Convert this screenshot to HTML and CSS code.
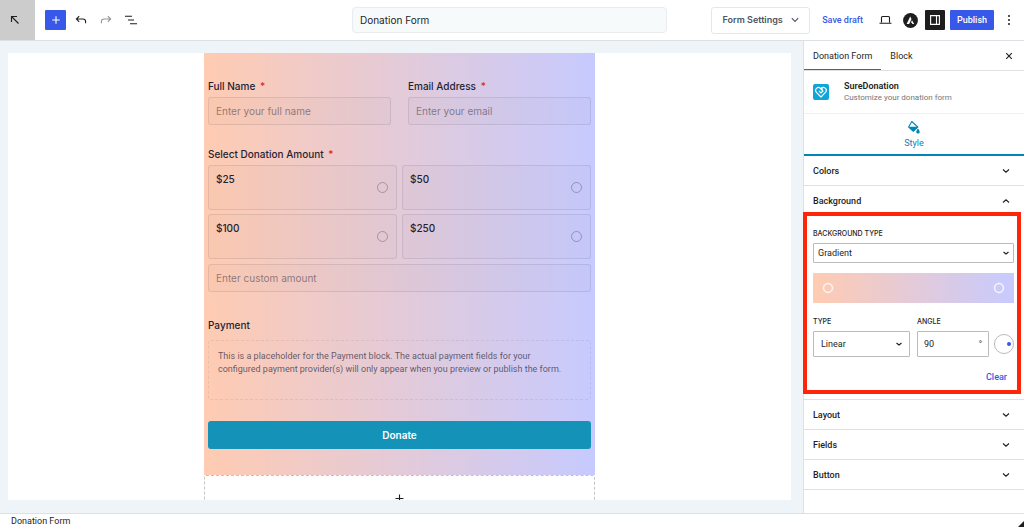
FILE: index.html
```html
<!DOCTYPE html>
<html lang="en">
<head>
    <meta charset="UTF-8">
    <meta name="viewport" content="width=device-width, initial-scale=1.0">
    <title>Donation Form - SureDonation</title>
    <link rel="stylesheet" href="styles.css">
</head>
<body>
    <header class="topbar">
        <div class="tools">
            <a href="#" class="back" aria-label="Back">
                <svg width="10" height="10" viewBox="0 0 10 10"><path d="M1.5 7V1.5H7M1.5 1.5l7 7"/></svg>
            </a>
            <button type="button" class="icon-btn add" aria-label="Add block">
                <svg width="10" height="10" viewBox="0 0 10 10"><path d="M5 1.2v7.6M1.2 5h7.6"/></svg>
            </button>
            <button type="button" class="icon-btn" aria-label="Undo">
                <svg width="12" height="10" viewBox="0 0 12 10"><path d="M4.2 1.2L1.4 4l2.8 2.8M1.4 4h6.4q2.8 0 2.8 2.6v1.6"/></svg>
            </button>
            <button type="button" class="icon-btn off" aria-label="Redo">
                <svg width="12" height="10" viewBox="0 0 12 10"><path d="M7.8 1.2L10.6 4 7.8 6.8M10.6 4H4.2Q1.4 4 1.4 6.6v1.6"/></svg>
            </button>
            <button type="button" class="icon-btn" aria-label="Document overview">
                <svg width="12" height="10" viewBox="0 0 12 10"><path d="M0 1.3h7M3 5h6M5 8.7h7"/></svg>
            </button>
        </div>
        <input type="text" class="title" value="Donation Form" aria-label="Form title">
        <div class="actions">
            <button type="button" class="settings">Form Settings
                <svg width="8" height="6" viewBox="0 0 8 6"><path d="M.8 1.2L4 4.4l3.2-3.2"/></svg>
            </button>
            <button type="button" class="save">Save draft</button>
            <button type="button" class="icon-btn" aria-label="Preview">
                <svg width="13" height="10" viewBox="0 0 13 10"><path d="M2.5 7.5v-5q0-1 1-1h6q1 0 1 1v5M.5 8.3h12"/></svg>
            </button>
            <button type="button" class="icon-btn" aria-label="Astra">
                <svg class="astra" width="15" height="15" viewBox="0 0 15 15"><circle cx="7.5" cy="7.5" r="7.4"/><path d="M3.6 11L7.2 3.4l1.3 2.7L6.2 11zM9 7.2L11.2 11H9.4l-.6-1.2h-1z"/></svg>
            </button>
            <button type="button" class="icon-btn toggle" aria-label="Settings">
                <svg width="10" height="10" viewBox="0 0 10 10"><path d="M.6.6h8.8v8.8H.6zM6.5.6v8.8"/></svg>
            </button>
            <button type="button" class="publish">Publish</button>
            <button type="button" class="icon-btn dots" aria-label="Options">
                <svg width="4" height="12" viewBox="0 0 4 12"><circle cx="2" cy="2" r="1"/><circle cx="2" cy="6" r="1"/><circle cx="2" cy="10" r="1"/></svg>
            </button>
        </div>
    </header>

    <div class="editor">
        <main class="canvas">
            <div class="page">
                <form class="form">
                    <div class="two-cols">
                        <div>
                            <label class="label" for="fullName">Full Name <span>*</span></label>
                            <input type="text" id="fullName" class="field" placeholder="Enter your full name">
                        </div>
                        <div>
                            <label class="label" for="email">Email Address <span>*</span></label>
                            <input type="email" id="email" class="field" placeholder="Enter your email">
                        </div>
                    </div>
                    <fieldset class="amounts">
                        <legend class="label">Select Donation Amount <span>*</span></legend>
                        <div class="options">
                            <label class="option">$25 <input type="radio" name="amount" value="25"></label>
                            <label class="option">$50 <input type="radio" name="amount" value="50"></label>
                            <label class="option">$100 <input type="radio" name="amount" value="100"></label>
                            <label class="option">$250 <input type="radio" name="amount" value="250"></label>
                        </div>
                        <input type="text" class="field" placeholder="Enter custom amount" aria-label="Custom amount">
                    </fieldset>
                    <div class="payment">
                        <h2 class="label">Payment</h2>
                        <p>This is a placeholder for the Payment block. The actual payment fields for your configured payment provider(s) will only appear when you preview or publish the form.</p>
                    </div>
                    <button type="button" class="donate">Donate</button>
                </form>
                <button type="button" class="appender" aria-label="Add block">
                    <svg width="9" height="9" viewBox="0 0 9 9"><path d="M4.5.5v8M.5 4.5h8"/></svg>
                </button>
            </div>
        </main>

        <aside class="sidebar">
            <div class="tabs">
                <button type="button" class="tab active">Donation Form</button>
                <button type="button" class="tab">Block</button>
                <button type="button" class="close" aria-label="Close settings">
                    <svg width="8" height="8" viewBox="0 0 8 8"><path d="M1.2 1.2l5.6 5.6M6.8 1.2L1.2 6.8"/></svg>
                </button>
            </div>
            <div class="brand">
                <svg width="16" height="16" viewBox="0 0 16 16"><rect width="16" height="16" rx="2"/><path d="M8 13L3.4 8.3C.9 5.5 4.8 1.7 7.5 4.5L10 7 8 9 6 7M8 4.5c2.7-2.8 7 .5 4.7 3.6L8 13M8.5 5.8l1.3-1"/></svg>
                <div>
                    <h2>SureDonation</h2>
                    <p>Customize your donation form</p>
                </div>
            </div>
            <button type="button" class="style-tab">
                <svg width="12" height="13" viewBox="0 0 12 13"><path d="M3.8.5L9.8 6 5.3 10.2.6 6z" class="line"/><path d="M.8 5.8h9L5.3 10.4zM10 7.5c2.5 3 2 5 0 5s-2.5-2 0-5z"/></svg>
                Style
            </button>

            <button type="button" class="section">Colors <svg width="8" height="6" viewBox="0 0 8 6"><path d="M1 1.5l3 2.7 3-2.7"/></svg></button>
            <button type="button" class="section open">Background <svg width="8" height="6" viewBox="0 0 8 6"><path d="M1 4.5l3-2.7 3 2.7"/></svg></button>
            <div class="panel">
                <label class="caption" for="bgType">Background type</label>
                <div class="select">
                    <select id="bgType"><option>Gradient</option><option>Color</option><option>Image</option></select>
                    <svg width="8" height="6" viewBox="0 0 8 6"><path d="M1.5 2L4 4l2.5-2"/></svg>
                </div>
                <div class="gradient">
                    <button type="button" aria-label="First color stop"></button>
                    <button type="button" aria-label="Last color stop"></button>
                </div>
                <div class="row">
                    <div class="type">
                        <label class="caption" for="gradType">Type</label>
                        <div class="select tall">
                            <select id="gradType"><option>Linear</option><option>Radial</option></select>
                            <svg width="8" height="6" viewBox="0 0 8 6"><path d="M1.5 2L4 4l2.5-2"/></svg>
                        </div>
                    </div>
                    <div class="angle">
                        <label class="caption" for="angle">Angle</label>
                        <div class="angle-box"><input type="text" id="angle" value="90"><span>°</span></div>
                    </div>
                    <div class="dial"></div>
                </div>
                <button type="button" class="clear">Clear</button>
            </div>
            <button type="button" class="section">Layout <svg width="8" height="6" viewBox="0 0 8 6"><path d="M1 1.5l3 2.7 3-2.7"/></svg></button>
            <button type="button" class="section">Fields <svg width="8" height="6" viewBox="0 0 8 6"><path d="M1 1.5l3 2.7 3-2.7"/></svg></button>
            <button type="button" class="section">Button <svg width="8" height="6" viewBox="0 0 8 6"><path d="M1 1.5l3 2.7 3-2.7"/></svg></button>
        </aside>
    </div>

    <footer class="breadcrumb">
        <span>Donation Form</span>
        <svg width="6" height="6" viewBox="0 0 6 6"><path d="M6 0v6H0z"/></svg>
    </footer>
</body>
</html>
```
FILE: styles.css
```css
* {
    box-sizing: border-box;
}
body {
    margin: 0;
    height: 100vh;
    display: flex;
    flex-direction: column;
    overflow: hidden;
    font-family: Roboto, "Liberation Sans", sans-serif;
    font-size: 9px;
    line-height: 12px;
    color: #1e1e1e;
    background: #fff;
}
button, input, select {
    font: inherit;
    color: inherit;
    margin: 0;
    padding: 0;
}
button {
    background: none;
    border: none;
    cursor: pointer;
}
h2, p {
    margin: 0;
}
svg {
    display: block;
    flex: none;
    fill: none;
    stroke: currentColor;
    stroke-width: 1.1;
}
.title, .settings, .form, .caption {
    font-family: Inter, "Liberation Sans", sans-serif;
}

/* top bar */
.topbar {
    display: grid;
    grid-template-columns: 1fr 315px 1fr;
    align-items: center;
    flex: none;
    height: 41px;
    padding-right: 5px;
    border-bottom: 1px solid #dcdfe3;
}
.tools, .actions {
    display: flex;
    align-items: center;
    gap: 5px;
}
.back {
    display: grid;
    place-items: center;
    width: 35px;
    height: 40px;
    margin-right: 5px;
    padding-right: 5px;
    background: #ccc;
    color: #1e1e1e;
}
.icon-btn {
    display: grid;
    place-items: center;
    width: 20px;
    height: 20px;
}
.add {
    width: 21px;
    background: #3858e9;
    color: #fff;
    border-radius: 1px;
}
.off {
    color: #949494;
}
.title {
    height: 26px;
    padding: 0 7px;
    border: 1px solid #e8ecee;
    border-radius: 4px;
    background: #f7fafa;
    font-size: 10px;
}
.actions {
    justify-content: flex-end;
}
.settings {
    display: flex;
    align-items: center;
    justify-content: center;
    gap: 8px;
    width: 99px;
    height: 27px;
    margin-right: 7px;
    border: 1px solid #e5e7eb;
    border-radius: 3px;
    color: #4b5563;
    font-weight: 600;
    white-space: nowrap;
}
.save {
    margin-right: 7px;
    color: #3858e9;
    font-weight: 500;
    white-space: nowrap;
}
.astra circle {
    fill: #1e1e1e;
    stroke: none;
}
.astra path {
    fill: #fff;
    stroke: none;
}
.toggle {
    background: #1e1e1e;
    color: #fff;
    border-radius: 1px;
}
.publish {
    width: 44px;
    height: 20px;
    border-radius: 1px;
    background: #3858e9;
    color: #fff;
    font-weight: 500;
}
.dots svg {
    fill: #1e1e1e;
    stroke: none;
}

/* canvas */
.editor {
    display: flex;
    flex: 1;
    min-height: 0;
}
.canvas {
    flex: 1;
    min-width: 0;
    padding: 12px 12px 13px 8px;
    background: #eff4f9;
}
.page {
    height: 100%;
    overflow: hidden;
    background: #fff;
}
.form, .appender {
    width: 391px;
    max-width: 100%;
    margin: 0 auto;
}
.form {
    padding: 25px 4px 26px;
    background: linear-gradient(90deg, #ffcbb2, #c7caff);
    color: #1f2433;
}
.two-cols {
    display: grid;
    grid-template-columns: 1fr 1fr;
    gap: 17px;
}
.label {
    display: block;
    padding: 0;
    margin-bottom: 3px;
    font-size: 10px;
    line-height: 16px;
    font-weight: 500;
}
.label span {
    margin-left: 2px;
    color: #dc2626;
}
.field {
    display: block;
    width: 100%;
    height: 28px;
    padding: 0 7px;
    border: 1px solid rgba(31, 36, 51, 0.1);
    border-radius: 3px;
    background: rgba(31, 36, 51, 0.02);
    font-size: 10px;
}
.field::placeholder {
    color: rgba(31, 36, 51, 0.5);
}
.amounts {
    margin: 21px 0 0;
    padding: 0;
    border: none;
}
.options {
    display: grid;
    grid-template-columns: 1fr 1fr;
    gap: 4px 5px;
    margin-bottom: 5px;
}
.option {
    display: flex;
    justify-content: space-between;
    height: 45px;
    padding: 6px 8px 6px 7px;
    border: 1px solid rgba(31, 36, 51, 0.1);
    border-radius: 3px;
    background: rgba(31, 36, 51, 0.02);
    font-size: 10px;
    line-height: 14px;
    font-weight: 500;
}
.option input {
    appearance: none;
    align-self: center;
    width: 11px;
    height: 11px;
    border: 1px solid rgba(31, 36, 51, 0.3);
    border-radius: 50%;
}
.payment {
    margin-top: 25px;
}
.payment .label {
    margin-bottom: 7px;
}
.payment p {
    height: 60px;
    padding: 9px 20px 9px 9px;
    border: 1px dashed rgba(31, 36, 51, 0.08);
    border-radius: 3px;
    font-family: Roboto, "Liberation Sans", sans-serif;
    line-height: 13px;
    color: rgba(31, 36, 51, 0.7);
}
.donate {
    display: block;
    width: 100%;
    height: 28px;
    margin-top: 21px;
    border-radius: 3px;
    background: #1592b8;
    color: #fff;
    font-size: 10px;
    font-weight: 600;
}
.appender {
    display: grid;
    place-items: center;
    height: 46px;
    border: 1px dashed #c4c4c4;
    border-radius: 2px;
    background: #fff;
}

/* settings sidebar */
.sidebar {
    flex: none;
    width: 221px;
    border-left: 1px solid #e0e0e0;
    background: #fff;
}
.tabs {
    display: flex;
    height: 30px;
    padding-right: 11px;
    border-bottom: 1px solid #e0e0e0;
}
.tab {
    padding: 0 9px;
    white-space: nowrap;
}
.tab.active {
    box-shadow: inset 0 -1px #3858e9;
}
.close {
    margin-left: auto;
}
.brand {
    display: flex;
    align-items: center;
    gap: 15px;
    height: 43px;
    padding: 0 9px;
    border-bottom: 1px solid #f0f0f0;
}
.brand rect {
    fill: #0ea5d7;
    stroke: none;
}
.brand path {
    stroke: #fff;
}
.brand h2 {
    font-size: 9px;
    font-weight: 600;
}
.brand p {
    font-size: 8px;
    color: #757575;
}
.style-tab {
    display: flex;
    flex-direction: column;
    align-items: center;
    justify-content: center;
    gap: 3px;
    width: 100%;
    height: 42px;
    padding-top: 1px;
    border-bottom: 2px solid #0284b5;
    color: #0284b5;
}
.style-tab svg {
    fill: currentColor;
    stroke: none;
}
.style-tab .line {
    fill: none;
    stroke: currentColor;
}
.section {
    display: flex;
    align-items: center;
    justify-content: space-between;
    width: 100%;
    height: 30px;
    padding: 0 14px 0 9px;
    border-bottom: 1px solid #e0e0e0;
    font-weight: 500;
}
.open {
    border-bottom: none;
}
.panel {
    position: relative;
    height: 184px;
    padding: 12px 10px 0 9px;
    border-bottom: 1px solid #e0e0e0;
}
/* highlight frame over the background options */
.panel::after {
    content: "";
    position: absolute;
    inset: -4px 3px 5px -1px;
    border: 4px solid #ff2508;
    pointer-events: none;
}
.caption {
    display: block;
    margin-bottom: 3px;
    font-size: 7px;
    font-weight: 500;
    text-transform: uppercase;
}
.select {
    position: relative;
    height: 20px;
}
.select select {
    appearance: none;
    width: 100%;
    height: 100%;
    padding: 0 4px;
    border: 1px solid #bbb;
    border-radius: 1px;
    background: #fff;
}
.select svg {
    position: absolute;
    right: 4px;
    top: calc(50% - 3px);
    pointer-events: none;
}
.select.tall, .angle-box {
    height: 26px;
}
.tall select {
    padding: 0 7px;
}
.tall svg {
    right: 7px;
}
.gradient {
    display: flex;
    align-items: center;
    justify-content: space-between;
    height: 30px;
    margin: 10px 0 13px;
    padding: 0 10px;
    background: linear-gradient(90deg, #ffcbb2, #c7caff);
}
.gradient button {
    width: 10px;
    height: 10px;
    border: 1px solid #fff;
    border-radius: 50%;
    box-shadow: 0 0 1px #fff, inset 0 0 1px #fff;
}
.row {
    display: flex;
    align-items: flex-end;
}
.type {
    flex: 1;
    margin-right: 7px;
}
.angle {
    width: 72px;
    margin-right: 5px;
}
.angle-box {
    display: flex;
    align-items: center;
    padding: 0 6px;
    border: 1px solid #bbb;
    border-radius: 1px;
}
.angle-box input {
    flex: 1;
    min-width: 0;
    border: none;
}
.dial {
    display: flex;
    align-items: center;
    justify-content: flex-end;
    width: 20px;
    height: 20px;
    margin-bottom: 3px;
    padding-right: 2px;
    border: 1px solid #bbb;
    border-radius: 50%;
}
.dial::after {
    content: "";
    width: 4px;
    height: 4px;
    border-radius: 50%;
    background: #3858e9;
}
.clear {
    display: block;
    margin: 14px 7px 0 auto;
    color: #3858e9;
    font-weight: 500;
}

.breadcrumb {
    display: flex;
    justify-content: space-between;
    align-items: flex-end;
    flex: none;
    height: 14px;
    padding-left: 11px;
    border-top: 1px solid #e0e0e0;
}
.breadcrumb svg {
    fill: #1e1e1e;
    stroke: none;
}
```
